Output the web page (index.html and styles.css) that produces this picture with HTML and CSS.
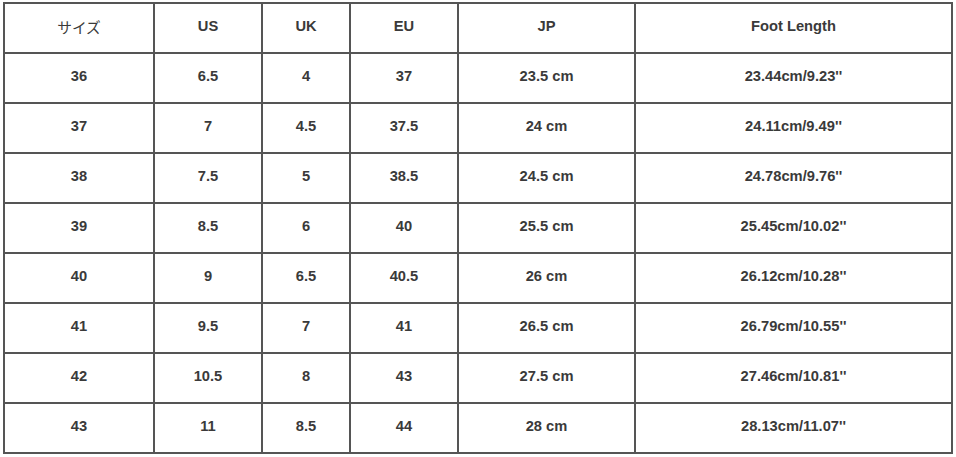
FILE: index.html
```html
<!DOCTYPE html>
<html lang="ja">
<head>
<meta charset="utf-8">
<title>サイズ表</title>
<link rel="stylesheet" href="styles.css">
</head>
<body>
<div class="chart">
  <div class="cell cell-jp">サイズ</div><div class="cell">US</div><div class="cell">UK</div><div class="cell">EU</div><div class="cell">JP</div><div class="cell">Foot Length</div>
  <div class="cell">36</div><div class="cell">6.5</div><div class="cell">4</div><div class="cell">37</div><div class="cell">23.5 cm</div><div class="cell">23.44cm/9.23''</div>
  <div class="cell">37</div><div class="cell">7</div><div class="cell">4.5</div><div class="cell">37.5</div><div class="cell">24 cm</div><div class="cell">24.11cm/9.49''</div>
  <div class="cell">38</div><div class="cell">7.5</div><div class="cell">5</div><div class="cell">38.5</div><div class="cell">24.5 cm</div><div class="cell">24.78cm/9.76''</div>
  <div class="cell">39</div><div class="cell">8.5</div><div class="cell">6</div><div class="cell">40</div><div class="cell">25.5 cm</div><div class="cell">25.45cm/10.02''</div>
  <div class="cell">40</div><div class="cell">9</div><div class="cell">6.5</div><div class="cell">40.5</div><div class="cell">26 cm</div><div class="cell">26.12cm/10.28''</div>
  <div class="cell">41</div><div class="cell">9.5</div><div class="cell">7</div><div class="cell">41</div><div class="cell">26.5 cm</div><div class="cell">26.79cm/10.55''</div>
  <div class="cell">42</div><div class="cell">10.5</div><div class="cell">8</div><div class="cell">43</div><div class="cell">27.5 cm</div><div class="cell">27.46cm/10.81''</div>
  <div class="cell">43</div><div class="cell">11</div><div class="cell">8.5</div><div class="cell">44</div><div class="cell">28 cm</div><div class="cell">28.13cm/11.07''</div>
</div>
</body>
</html>
```
FILE: styles.css
```css
html, body {
  margin: 0;
  background: #ffffff;
}
body {
  padding: 2px 0 0 3px;
  font-family: "Liberation Sans", Arial, "Noto Sans CJK JP", sans-serif;
  font-size: 14.7px;
  font-weight: bold;
  color: #3a3a3a;
}
.chart {
  display: grid;
  grid-template-columns: 148px 106px 86px 106px 175px 315px;
  grid-auto-rows: 48px;
  gap: 2px;
  padding: 2px;
  width: max-content;
  background: #555555;
}
.cell {
  background: #ffffff;
  display: flex;
  align-items: center;
  justify-content: center;
  padding-bottom: 4px;
}
.cell-jp {
  font-weight: normal;
}
```
